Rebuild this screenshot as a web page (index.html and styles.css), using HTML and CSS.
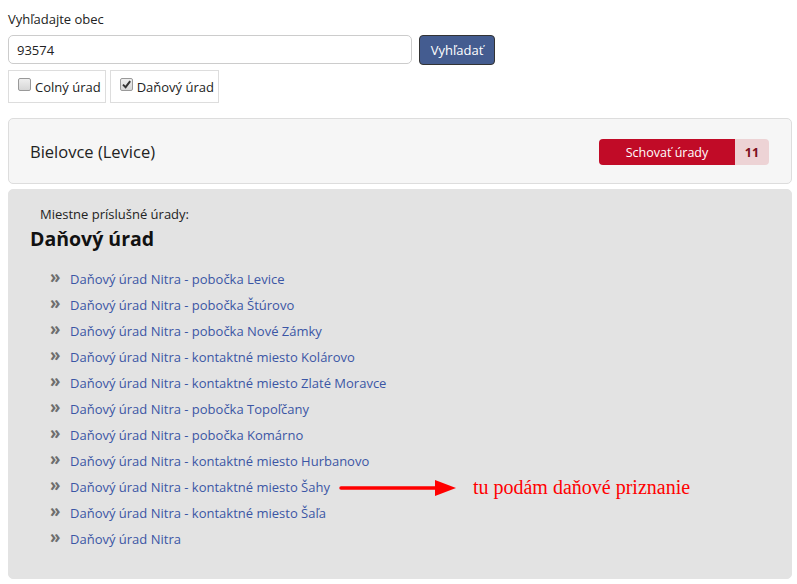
FILE: index.html
```html
<!DOCTYPE html>
<html lang="sk">
<head>
<meta charset="utf-8">
<link rel="stylesheet" href="styles.css">
</head>
<body>
<div class="search">
  <label class="lbl">Vyhľadajte obec</label>
  <div class="row">
    <input class="inp" type="text" value="93574">
    <button class="btn">Vyhľadať</button>
  </div>
  <div class="checks">
    <label class="chk"><span class="box"></span>Colný úrad</label>
    <label class="chk"><span class="box on"><svg viewBox="0 0 11 11" width="11" height="11"><path d="M2 5.6 L4.6 8.2 L9.2 2.2" fill="none" stroke="#333" stroke-width="1.9"/></svg></span>Daňový úrad</label>
  </div>
</div>
<div class="panel head">
  <div class="town">Bielovce (Levice)</div>
  <div class="hide"><span class="hbtn">Schovať úrady</span><span class="cnt">11</span></div>
</div>
<div class="panel body">
  <div class="sub">Miestne príslušné úrady:</div>
  <h2 class="title">Daňový úrad</h2>
  <ul class="list">
    <li><a>Daňový úrad Nitra - pobočka Levice</a></li>
    <li><a>Daňový úrad Nitra - pobočka Štúrovo</a></li>
    <li><a>Daňový úrad Nitra - pobočka Nové Zámky</a></li>
    <li><a>Daňový úrad Nitra - kontaktné miesto Kolárovo</a></li>
    <li><a>Daňový úrad Nitra - kontaktné miesto Zlaté Moravce</a></li>
    <li><a>Daňový úrad Nitra - pobočka Topoľčany</a></li>
    <li><a>Daňový úrad Nitra - pobočka Komárno</a></li>
    <li><a>Daňový úrad Nitra - kontaktné miesto Hurbanovo</a></li>
    <li class="mark"><a>Daňový úrad Nitra - kontaktné miesto Šahy</a><span class="note"><svg class="arrow" width="118" height="20" viewBox="0 0 118 20"><line x1="2" y1="10" x2="98" y2="10" stroke="#f00" stroke-width="3.5" stroke-linecap="round"/><polygon points="96,2 117,10 96,18" fill="#f00"/></svg><span class="ntext">tu podám daňové priznanie</span></span></li>
    <li><a>Daňový úrad Nitra - kontaktné miesto Šaľa</a></li>
    <li><a>Daňový úrad Nitra</a></li>
  </ul>
</div>
</body>
</html>
```
FILE: styles.css
```css
html, body { margin: 0; padding: 0; }
body {
  font-family: "Open Sans", "Noto Sans", sans-serif;
  font-size: 13px;
  color: #222;
  background: #fff;
  padding: 8px 5px 6px 8px;
}
.search { display: flex; flex-direction: column; }
.lbl { line-height: 20px; height: 20px; padding-top: 1px; color: #222; }
.row { display: flex; gap: 7px; margin-top: 6px; }
.inp {
  width: 404px; height: 29px; box-sizing: border-box;
  border: 1px solid #ccc; border-radius: 5px;
  font-family: inherit; font-size: 13px; color: #222;
  padding: 0 8px; margin: 0; outline: none;
}
.btn {
  width: 76px; height: 30px; box-sizing: border-box;
  background: #445c90; color: #fff; border: 1px solid #333; border-radius: 4px;
  font-family: inherit; font-size: 13px; padding: 0; margin: 0;
}
.checks { display: flex; gap: 4px; margin-top: 5px; }
.chk {
  display: flex; align-items: center; height: 33px; box-sizing: border-box;
  border: 1px solid #ddd; padding: 0 4px 0 9px; color: #222; font-size: 13px;
}
.box {
  width: 11px; height: 11px; border: 1px solid #999; border-radius: 2px;
  background: linear-gradient(#eee, #d6d6d6); margin-right: 4px; display: flex; margin-top: -4px;
}
.box svg { display: block; }
.panel {
  border: 1px solid #ddd; border-radius: 5px; box-sizing: border-box; width: 784px;
}
.head {
  margin-top: 15px; height: 66px; background: #f6f6f6;
  display: flex; align-items: center; justify-content: space-between;
  padding: 0 22px 0 21px;
}
.town { font-size: 16.5px; color: #222; margin-top: 1px; }
.hide { display: flex; height: 26px; border-radius: 4px; overflow: hidden; margin-top: 2px; }
.hbtn {
  width: 136px; background: #c10b27; color: #fff; display: flex; align-items: center; justify-content: center; font-size: 12.5px;
}
.cnt {
  width: 34px; background: #edd3d5; color: #7d1020; font-weight: bold; font-size: 12.5px;
  display: flex; align-items: center; justify-content: center;
}
.body {
  margin-top: 5px; background: #e3e3e3; border-color: #e3e3e3; height: 390px;
  padding: 14px 21px 0 21px;
}
.sub { padding-left: 10px; line-height: 20px; font-size: 13px; color: #222; }
.title { margin: 1px 0 0 0; font-size: 19.5px; font-weight: bold; line-height: 28px; color: #111; }
.list { list-style: none; margin: 13px 0 0 0; padding: 0; }
.list li { height: 26px; line-height: 26px; display: flex; align-items: center; padding-left: 20px; position: relative; }
.list li::before { content: "»"; color: #6e6e6e; font-size: 17px; font-weight: bold; width: 20px; display: inline-block; margin-top: -4px; }
.list a { color: #3b56a5; font-size: 13px; }
.note { display: flex; align-items: center; margin-left: 9px; }
.arrow { display: block; margin-top: 1px; }
.ntext {
  font-family: "Liberation Serif", serif; color: #f00; font-size: 20px; margin-left: 16px;
}
```
